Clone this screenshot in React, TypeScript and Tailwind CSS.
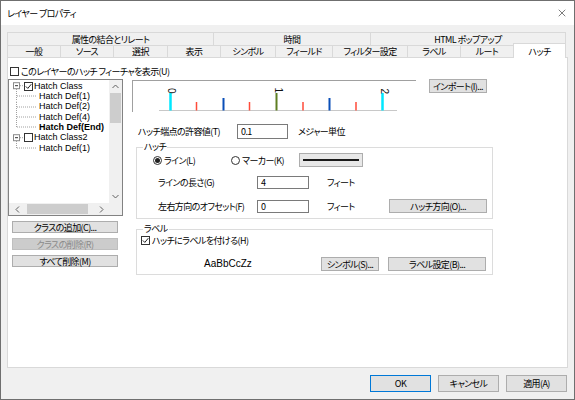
import { X } from "lucide-react";

const jp = "font-['Noto_Sans_CJK_JP',sans-serif] [font-feature-settings:'palt']";

function Checkbox({ checked = false }: { checked?: boolean }) {
  return (
    <span className="flex h-[9px] w-[9px] shrink-0 items-center justify-center border border-[#333] bg-white">
      {checked && (
        <svg width="7" height="7" viewBox="0 0 7 7">
          <path d="M0.8 3.4 L2.8 5.4 L6.3 1.2" fill="none" stroke="#222" strokeWidth="1" />
        </svg>
      )}
    </span>
  );
}

function Radio({ checked = false }: { checked?: boolean }) {
  return (
    <span className="flex h-[9px] w-[9px] shrink-0 items-center justify-center rounded-full border border-[#333] bg-white">
      {checked && <span className="h-[5px] w-[5px] rounded-full bg-[#222]" />}
    </span>
  );
}

function Btn({
  children,
  className = "",
  disabled = false,
  primary = false,
}: {
  children: React.ReactNode;
  className?: string;
  disabled?: boolean;
  primary?: boolean;
}) {
  const tone = disabled
    ? "border-[#bfbfbf] bg-[#cccccc] text-[#8a8a8a]"
    : primary
      ? "border-[#0078d7] bg-[#e1e1e1]"
      : "border-[#adadad] bg-[#e1e1e1]";
  return (
    <div
      className={`flex shrink-0 items-center justify-center whitespace-nowrap border leading-none ${tone} ${className}`}
    >
      {children}
    </div>
  );
}

function Field({ value, className = "" }: { value: string; className?: string }) {
  return (
    <div className={`flex shrink-0 items-center border border-[#7a7a7a] bg-white pl-[3px] leading-none ${className}`}>
      {value}
    </div>
  );
}

function Chevron({ dir }: { dir: "up" | "down" | "left" | "right" }) {
  const d = {
    up: "M0.5 4 L3.5 1 L6.5 4",
    down: "M0.5 1 L3.5 4 L6.5 1",
    left: "M4 0.5 L1 3.5 L4 6.5",
    right: "M1 0.5 L4 3.5 L1 6.5",
  }[dir];
  const vertical = dir === "up" || dir === "down";
  return (
    <svg width={vertical ? 7 : 5} height={vertical ? 5 : 7} viewBox={vertical ? "0 0 7 5" : "0 0 5 7"}>
      <path d={d} fill="none" stroke="#606060" strokeWidth="1" />
    </svg>
  );
}

const ROW_H = 10.33;

function ParentRow({ label, checked }: { label: string; checked?: boolean }) {
  return (
    <div className="flex h-[10.33px] items-center">
      <svg width="15" height={ROW_H} className="shrink-0">
        <rect x="4.5" y="1.7" width="6" height="6" fill="white" stroke="#8a8a8a" strokeWidth="1" />
        <line x1="6" y1="4.7" x2="9" y2="4.7" stroke="#333" strokeWidth="1" />
        <line x1="11" y1="4.7" x2="15" y2="4.7" stroke="#a0a0a0" strokeWidth="1" strokeDasharray="1 1" />
        <line x1="7.5" y1="8" x2="7.5" y2={ROW_H} stroke="#a0a0a0" strokeWidth="1" strokeDasharray="1 1" />
      </svg>
      <Checkbox checked={checked} />
      <span className="ml-[1px] whitespace-nowrap leading-none">{label}</span>
    </div>
  );
}

function ChildRow({ label, last, bold }: { label: string; last?: boolean; bold?: boolean }) {
  return (
    <div className="flex h-[10.33px] items-center">
      <svg width="29" height={ROW_H} className="shrink-0">
        <line x1="7.5" y1="0" x2="7.5" y2={last ? 5 : ROW_H} stroke="#a0a0a0" strokeWidth="1" strokeDasharray="1 1" />
        <line x1="8" y1="5" x2="28" y2="5" stroke="#a0a0a0" strokeWidth="1" strokeDasharray="1 1" />
      </svg>
      <span className={`ml-[1px] whitespace-nowrap leading-none ${bold ? "font-bold" : ""}`}>{label}</span>
    </div>
  );
}

function HatchPreview() {
  const ticks = [
    { x: 37.5, w: 2.5, top: 12, c: "#00e8ff" },
    { x: 63.5, w: 1.5, top: 21, c: "#ff4b3a" },
    { x: 90.5, w: 2, top: 17, c: "#0a4fb8" },
    { x: 116.5, w: 1.5, top: 21, c: "#ff4b3a" },
    { x: 143.5, w: 2, top: 12, c: "#5f7f22" },
    { x: 170, w: 1.5, top: 21, c: "#ff4b3a" },
    { x: 196.5, w: 2, top: 17, c: "#0a4fb8" },
    { x: 223, w: 1.5, top: 21, c: "#ff4b3a" },
    { x: 249.5, w: 2.5, top: 12, c: "#00e8ff" },
  ];
  const labels = [
    { t: "0", x: 38, y: 9.5 },
    { t: "1", x: 145, y: 9 },
    { t: "2", x: 251, y: 10 },
  ];
  return (
    <svg width="283" height="31" className="block">
      <line x1="26" y1="29.5" x2="264" y2="29.5" stroke="#c8c8c8" strokeWidth="1" />
      {ticks.map((t, i) => (
        <rect key={i} x={t.x - t.w / 2} y={t.top} width={t.w} height={29.5 - t.top} fill={t.c} />
      ))}
      {labels.map((l) => (
        <text
          key={l.t}
          x={l.x}
          y={l.y}
          transform={`rotate(90 ${l.x} ${l.y})`}
          textAnchor="middle"
          dominantBaseline="central"
          fontSize="10"
          fontFamily="Liberation Sans, sans-serif"
          fill="#111"
        >
          {l.t}
        </text>
      ))}
    </svg>
  );
}

const topTabs = [
  { label: "属性の結合とリレート", w: "w-[206px]" },
  { label: "時間", w: "w-[157px]" },
  { label: "HTML ポップアップ", w: "w-[196px] border-r" },
];

const bottomTabs = [
  { label: "一般", w: "w-[53px]" },
  { label: "ソース", w: "w-[53px]" },
  { label: "選択", w: "w-[54px]" },
  { label: "表示", w: "w-[53px]" },
  { label: "シンボル", w: "w-[55px]" },
  { label: "フィールド", w: "w-[57px]" },
  { label: "フィルター設定", w: "w-[75px]" },
  { label: "ラベル", w: "w-[53px]" },
  { label: "ルート", w: "w-[53px]" },
];

export default function App() {
  return (
    <div
      className={`flex h-[400px] w-[575px] flex-col border border-[#6f6f6f] bg-[#f0f0f0] text-[9px] tracking-[-0.6px] text-black ${jp}`}
    >
      {/* Title bar */}
      <div className="flex h-[24px] shrink-0 items-center justify-between bg-white pl-[6px] pr-[6px]">
        <span className="leading-none">レイヤー プロパティ</span>
        <X size={12} strokeWidth={1.1} color="#111" />
      </div>

      {/* Tabs */}
      <div className="ml-[6px] mt-[7px] flex flex-col">
        <div className="flex h-[13px]">
          {topTabs.map((t) => (
            <div
              key={t.label}
              className={`flex items-center justify-center border-l border-t border-[#d9d9d9] leading-none ${t.w}`}
            >
              {t.label}
            </div>
          ))}
        </div>
        <div className="flex h-[12px] items-end">
          {bottomTabs.map((t) => (
            <div
              key={t.label}
              className={`flex h-[12px] items-center justify-center border-l border-t border-[#d9d9d9] leading-none ${t.w}`}
            >
              {t.label}
            </div>
          ))}
          <div className="relative z-10 -mb-[1px] flex h-[15px] w-[53px] items-start justify-center border-l border-r border-t border-[#d9d9d9] bg-white pt-[3px] leading-none">
            ハッチ
          </div>
        </div>
      </div>

      {/* Panel */}
      <div className="ml-[6px] flex h-[311px] w-[561px] flex-col border border-[#d9d9d9] bg-white">
        <div className="mt-[7px] flex h-[12px] items-center pl-[2px]">
          <Checkbox />
          <span className="ml-[2px] leading-none">このレイヤーのハッチ フィーチャを表示(U)</span>
        </div>

        <div className="mt-[2px] flex items-start">
          {/* Left column */}
          <div className="flex w-[115px] flex-col">
            <div className="flex h-[137px] flex-col border border-[#828282] font-['Liberation_Sans',sans-serif] tracking-normal">
              <div className="flex min-h-0 flex-1">
                <div className="flex-1 pt-[1px]">
                  <ParentRow label="Hatch Class" checked />
                  <ChildRow label="Hatch Def(1)" />
                  <ChildRow label="Hatch Def(2)" />
                  <ChildRow label="Hatch Def(4)" />
                  <ChildRow label="Hatch Def(End)" last bold />
                  <ParentRow label="Hatch Class2" />
                  <ChildRow label="Hatch Def(1)" last />
                </div>
                <div className="flex w-[13px] flex-col bg-[#f0f0f0]">
                  <div className="flex h-[13px] items-center justify-center">
                    <Chevron dir="up" />
                  </div>
                  <div className="mx-[1px] h-[30px] bg-[#cdcdcd]" />
                  <div className="flex-1" />
                  <div className="flex h-[13px] items-center justify-center">
                    <Chevron dir="down" />
                  </div>
                </div>
              </div>
              <div className="flex h-[12px] shrink-0">
                <div className="flex flex-1 items-center bg-[#f0f0f0]">
                  <div className="flex w-[16px] justify-center">
                    <Chevron dir="left" />
                  </div>
                  <div className="ml-[2px] h-[10px] w-[61px] bg-[#cdcdcd]" />
                  <div className="flex-1" />
                  <div className="flex w-[16px] justify-center">
                    <Chevron dir="right" />
                  </div>
                </div>
                <div className="w-[13px] bg-[#f0f0f0]" />
              </div>
            </div>
            <div className="ml-[4px] mt-[5px] flex flex-col gap-[5px]">
              <Btn className="h-[12px] w-[106px]">クラスの追加(C)...</Btn>
              <Btn className="h-[12px] w-[106px]" disabled>
                クラスの削除(R)
              </Btn>
              <Btn className="h-[12px] w-[106px]">すべて削除(M)</Btn>
            </div>
          </div>

          {/* Right column */}
          <div className="ml-[9px] flex flex-col">
            <div className="flex items-start">
              <div className="mt-[1px] h-[32px] w-[284px] border-l border-t border-[#a0a0a0]">
                <HatchPreview />
              </div>
              <Btn className="ml-[13px] h-[14px] w-[58px]">インポート(I)...</Btn>
            </div>

            <div className="mt-[12px] flex h-[15px] items-center">
              <span className="w-[105px] pl-[6px] leading-none">ハッチ端点の許容値(T)</span>
              <Field value="0.1" className="h-[15px] w-[51px]" />
              <span className="ml-[10px] leading-none">メジャー単位</span>
            </div>

            {/* ハッチ group */}
            <div className="relative ml-[4px] mt-[8px] h-[72px] w-[357px] border border-[#dcdcdc]">
              <span className="absolute -top-[6px] left-[6px] bg-white px-[1px] leading-none">ハッチ</span>
              <div className="mt-[5px] flex h-[14px] items-center pl-[16px]">
                <div className="flex w-[78px] items-center">
                  <Radio checked />
                  <span className="ml-[2px] leading-none">ライン(L)</span>
                </div>
                <div className="flex w-[68px] items-center">
                  <Radio />
                  <span className="ml-[2px] leading-none">マーカー(K)</span>
                </div>
                <div className="flex h-[14px] w-[64px] flex-col justify-center border border-[#adadad] bg-[#e8e8e8] px-[3px]">
                  <div className="h-[2px] bg-[#1a1a1a]" />
                </div>
              </div>
              <div className="mt-[9px] flex h-[13px] items-center pl-[21px]">
                <span className="w-[99px] leading-none">ラインの長さ(G)</span>
                <Field value="4" className="h-[13px] w-[52px]" />
                <span className="ml-[18px] leading-none">フィート</span>
              </div>
              <div className="mt-[10px] flex h-[14px] items-center pl-[21px]">
                <span className="w-[99px] leading-none">左右方向のオフセット(F)</span>
                <Field value="0" className="h-[13px] w-[52px]" />
                <span className="ml-[18px] w-[62px] leading-none">フィート</span>
                <Btn className="h-[14px] w-[98px]">ハッチ方向(O)...</Btn>
              </div>
            </div>

            {/* ラベル group */}
            <div className="relative ml-[4px] mt-[10px] h-[46px] w-[357px] border border-[#dcdcdc]">
              <span className="absolute -top-[6px] left-[6px] bg-white px-[1px] leading-none">ラベル</span>
              <div className="mt-[5px] flex h-[11px] items-center pl-[4px]">
                <Checkbox checked />
                <span className="ml-[2px] leading-none">ハッチにラベルを付ける(H)</span>
              </div>
              <div className="mt-[11px] flex h-[14px] items-center pl-[67px]">
                <span className="w-[117px] font-['Liberation_Sans',sans-serif] text-[10px] leading-none tracking-normal">
                  AaBbCcZz
                </span>
                <Btn className="h-[14px] w-[58px]">シンボル(S)...</Btn>
                <Btn className="ml-[9px] h-[14px] w-[98px]">ラベル設定(B)...</Btn>
              </div>
            </div>
          </div>
        </div>
      </div>

      {/* Footer */}
      <div className="mt-[7px] flex justify-end gap-[7px] pr-[7px]">
        <Btn className="h-[17px] w-[61px]" primary>
          OK
        </Btn>
        <Btn className="h-[17px] w-[61px]">キャンセル</Btn>
        <Btn className="h-[17px] w-[61px]">適用(A)</Btn>
      </div>
    </div>
  );
}
